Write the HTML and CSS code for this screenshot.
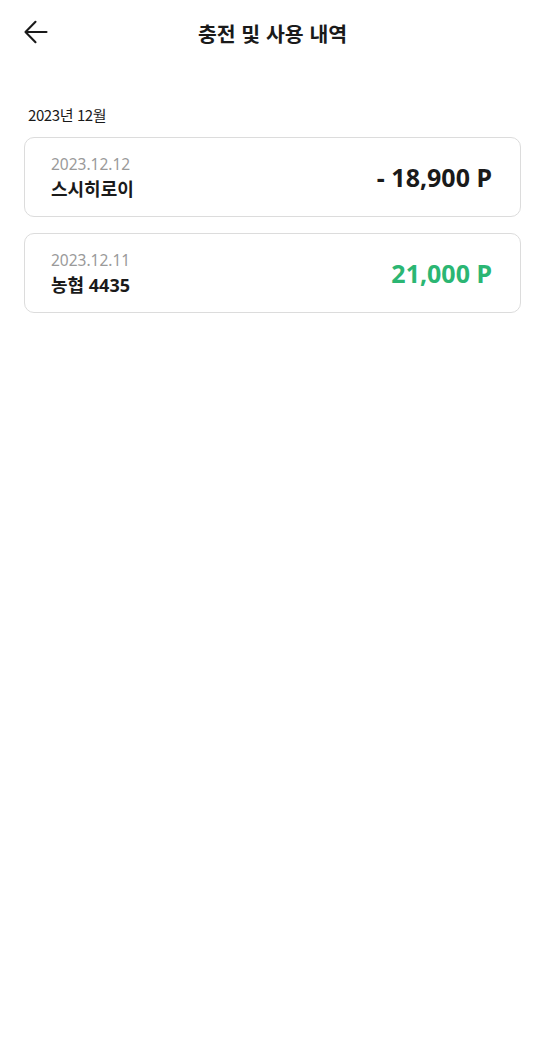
FILE: index.html
```html
<!DOCTYPE html>
<html lang="ko">
<head>
<meta charset="utf-8">
<title>충전 및 사용 내역</title>
<link rel="stylesheet" href="styles.css">
</head>
<body>
<header class="topbar">
  <button class="back" aria-label="뒤로">
    <svg width="24" height="24" viewBox="0 0 24 24" fill="none" stroke="#1a1a1a" stroke-width="2.1" stroke-linecap="round" stroke-linejoin="round">
      <path d="M22.5 12H2"/>
      <path d="M11.5 1.8 1.5 12l10 10.2"/>
    </svg>
  </button>
  <h1 class="title">충전 및 사용 내역</h1>
  <span></span>
</header>
<main class="content">
  <h2 class="month">2023년 12월</h2>
  <ul class="list">
    <li class="card">
      <div class="info">
        <div class="date">2023.12.12</div>
        <div class="name">스시히로이</div>
      </div>
      <div class="amount">- 18,900 P</div>
    </li>
    <li class="card">
      <div class="info">
        <div class="date">2023.12.11</div>
        <div class="name">농협 4435</div>
      </div>
      <div class="amount plus">21,000 P</div>
    </li>
  </ul>
</main>
</body>
</html>
```
FILE: styles.css
```css
* { box-sizing: border-box; }
html, body {
  margin: 0;
  padding: 0;
  background: #fff;
}
body {
  font-family: "Noto Sans", "Noto Sans CJK KR", sans-serif;
  color: #1a1a1a;
  width: 549px;
}
.topbar {
  display: grid;
  grid-template-columns: 1fr auto 1fr;
  align-items: center;
  height: 66px;
  padding: 0 28px 0 24px;
}
.back {
  justify-self: start;
  background: none;
  border: 0;
  padding: 0;
  width: 24px;
  height: 24px;
  display: flex;
  cursor: pointer;
  margin-top: -3px;
}
.title {
  margin: 0;
  font-size: 20.5px;
  font-weight: 700;
  line-height: 28px;
  font-family: "Noto Sans CJK KR", sans-serif;
}
.content {
  padding: 39px 28px 0 24px;
}
.month {
  margin: 0 0 12px 4px;
  font-size: 15px;
  font-weight: 400;
  line-height: 20px;
  letter-spacing: -0.4px;
  font-family: "Noto Sans CJK KR", sans-serif;
}
.list {
  list-style: none;
  margin: 0;
  padding: 0;
  display: flex;
  flex-direction: column;
  gap: 16px;
}
.card {
  display: flex;
  align-items: center;
  justify-content: space-between;
  height: 80px;
  border: 1px solid #dcdcdc;
  border-radius: 10px;
  padding: 0 28px 0 26px;
}
.info {
  display: flex;
  flex-direction: column;
  gap: 3px;
  margin-top: 1px;
}
.date {
  font-size: 15.5px;
  line-height: 21px;
  color: #9a9a9a;
}
.name {
  font-size: 18px;
  line-height: 23px;
  font-weight: 700;
}
.amount {
  font-size: 25px;
  font-weight: 700;
  line-height: 32px;
}
.amount.plus {
  color: #2bb673;
}
```
